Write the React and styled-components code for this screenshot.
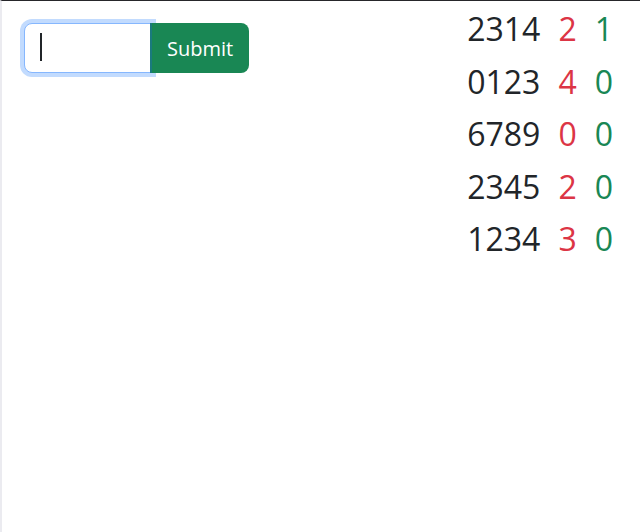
import React from "react";
import styled, { createGlobalStyle } from "styled-components";

const Global = createGlobalStyle`
  html, body { margin: 0; padding: 0; background: #fff; }
  body { font-family: "Open Sans", "Noto Sans", "Liberation Sans", sans-serif; color: #212529; }
`;

const Frame = styled.div`
  box-sizing: border-box;
  min-height: 100vh;
  border-top: 1px solid #26262a;
  border-left: 2px solid #ebebf0;
  display: flex;
  justify-content: space-between;
  align-items: flex-start;
  padding: 0 27px 0 22px;
`;

const InputGroup = styled.form`
  display: flex;
  align-items: stretch;
  height: 50px;
  margin-top: 22px;
`;

const InputWrap = styled.div`
  position: relative;
  display: flex;
`;

const Field = styled.input`
  box-sizing: border-box;
  width: 128px;
  height: 50px;
  margin: 0;
  padding: 0 16px;
  font: 20px "Open Sans", sans-serif;
  color: #212529;
  border: 1px solid #86b7fe;
  border-radius: 8px 0 0 8px;
  box-shadow: 0 0 0 4px #c2dbfe;
  outline: none;
  caret-color: transparent;
`;

const Caret = styled.span`
  position: absolute;
  left: 16px;
  top: 10px;
  width: 2px;
  height: 28px;
  background: #212529;
`;

const Button = styled.button`
  position: relative;
  z-index: 1;
  box-sizing: border-box;
  height: 50px;
  margin-left: -2px;
  padding: 0 16px 0 15px;
  font: 20px "Open Sans", sans-serif;
  color: #fff;
  background: #198754;
  border: none;
  border-left: 2px solid #1a7a7e;
  border-radius: 0 8px 8px 0;
`;

const Scores = styled.div`
  display: grid;
  grid-template-columns: auto auto auto;
  column-gap: 16px;
  margin-top: 2px;
  font-size: 32px;
  line-height: 52.6px;
`;

const Cell = styled.span`
  color: ${(p) => p.$tone === "red" ? "#dc3545" : p.$tone === "green" ? "#198754" : "#212529"};
  margin-left: ${(p) => p.$tone === "green" ? "2px" : "0"};
  margin-right: ${(p) => p.$tone ? "0" : "2px"};
`;

const rows = [
  ["2314", 2, 1],
  ["0123", 4, 0],
  ["6789", 0, 0],
  ["2345", 2, 0],
  ["1234", 3, 0],
];

export default function App() {
  return (
    <>
      <Global />
      <Frame>
        <InputGroup onSubmit={(e) => e.preventDefault()}>
          <InputWrap>
            <Field type="text" />
            <Caret />
          </InputWrap>
          <Button type="submit">Submit</Button>
        </InputGroup>
        <Scores>
          {rows.map(([code, a, b]) => (
            <React.Fragment key={code}>
              <Cell>{code}</Cell>
              <Cell $tone="red">{a}</Cell>
              <Cell $tone="green">{b}</Cell>
            </React.Fragment>
          ))}
        </Scores>
      </Frame>
    </>
  );
}
